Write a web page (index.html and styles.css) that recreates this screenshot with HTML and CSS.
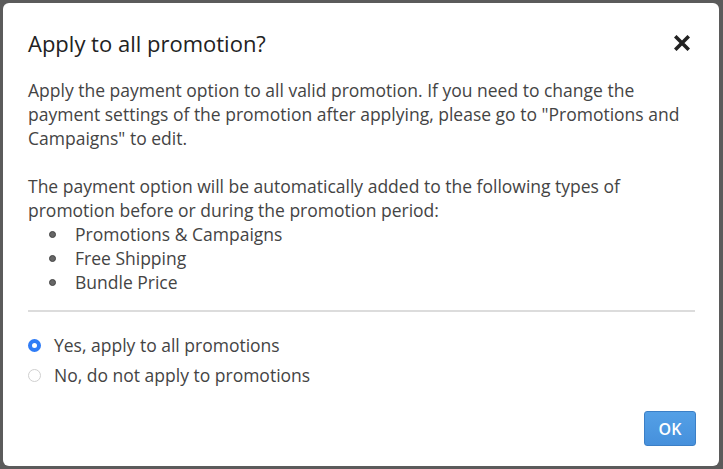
FILE: index.html
```html
<!DOCTYPE html>
<html lang="en">
<head>
  <meta charset="UTF-8">
  <title>Apply to all promotion?</title>
  <link rel="stylesheet" href="styles.css">
</head>
<body>
  <div class="dialog">
    <div class="dialog-header">
      <h2>Apply to all promotion?</h2>
      <button class="close" aria-label="Close">
        <svg width="16" height="16" viewBox="0 0 16 16">
          <path d="M2.5 2.5 L13.5 13.5 M13.5 2.5 L2.5 13.5" stroke="#222" stroke-width="3.6" stroke-linecap="square"/>
        </svg>
      </button>
    </div>

    <div class="dialog-body">
      <p>Apply the payment option to all valid promotion. If you need to change the payment settings of the promotion after applying, please go to "Promotions and Campaigns" to edit.</p>
      <p>The payment option will be automatically added to the following types of promotion before or during the promotion period:</p>
      <ul class="types">
        <li>Promotions &amp; Campaigns</li>
        <li>Free Shipping</li>
        <li>Bundle Price</li>
      </ul>

      <hr>

      <label class="option"><input type="radio" name="apply" checked> Yes, apply to all promotions</label>
      <label class="option"><input type="radio" name="apply"> No, do not apply to promotions</label>
    </div>

    <div class="dialog-footer">
      <button class="btn-ok">OK</button>
    </div>
  </div>
</body>
</html>
```

FILE: styles.css
```css
body {
  margin: 0;
  background: #5b5b5b;
  font-family: "Open Sans", "Liberation Sans", sans-serif;
  color: #444;
}
.dialog {
  margin: 3px;
  width: 716px;
  height: 463px;
  box-sizing: border-box;
  background: #fff;
  border-radius: 6px;
  display: flex;
  flex-direction: column;
}
.dialog-header {
  display: flex;
  align-items: center;
  justify-content: space-between;
  padding: 25px 29px 0 25px;
}
.dialog-header h2 {
  margin: 0;
  font-size: 22px;
  font-weight: 400;
  line-height: 30px;
  color: #222;
}
.close {
  background: none;
  border: none;
  padding: 0;
  width: 16px;
  height: 16px;
  cursor: pointer;
}
.close svg {
  display: block;
}
.dialog-body {
  padding: 20px 24px 0 25px;
  font-size: 17.5px;
  line-height: 24px;
}
.dialog-body p {
  margin: 0 0 24px;
}
.dialog-body p + p {
  margin-bottom: 0;
}
.types {
  list-style: none;
  margin: 0;
  padding: 0;
}
.types li {
  display: flex;
  align-items: center;
}
.types li::before {
  content: "";
  width: 5px;
  height: 5px;
  border-radius: 50%;
  background: #666;
  border: 1px solid #444;
  margin: 0 19px 0 21px;
}
hr {
  border: none;
  height: 2px;
  background: #dcdcdc;
  margin: 16px 0 18px;
}
.option {
  display: flex;
  align-items: center;
  height: 30px;
  cursor: pointer;
}
.option input {
  appearance: none;
  -webkit-appearance: none;
  margin: 0 13px 0 0;
  width: 13px;
  height: 13px;
  box-sizing: border-box;
  border-radius: 50%;
  border: 1px solid #d0d0d0;
  background: #fff;
}
.option input:checked {
  border: 4px solid #2f7cf6;
}
.dialog-footer {
  margin-top: auto;
  display: flex;
  justify-content: flex-end;
  padding: 0 23px 20px;
}
.btn-ok {
  width: 52px;
  height: 35px;
  background: linear-gradient(#54a0e6, #4690dc);
  border: 1px solid #3b7fc6;
  border-radius: 3px;
  color: #fff;
  font-family: "Open Sans", "Liberation Sans", sans-serif;
  font-size: 16px;
  font-weight: 600;
  cursor: pointer;
}
```
